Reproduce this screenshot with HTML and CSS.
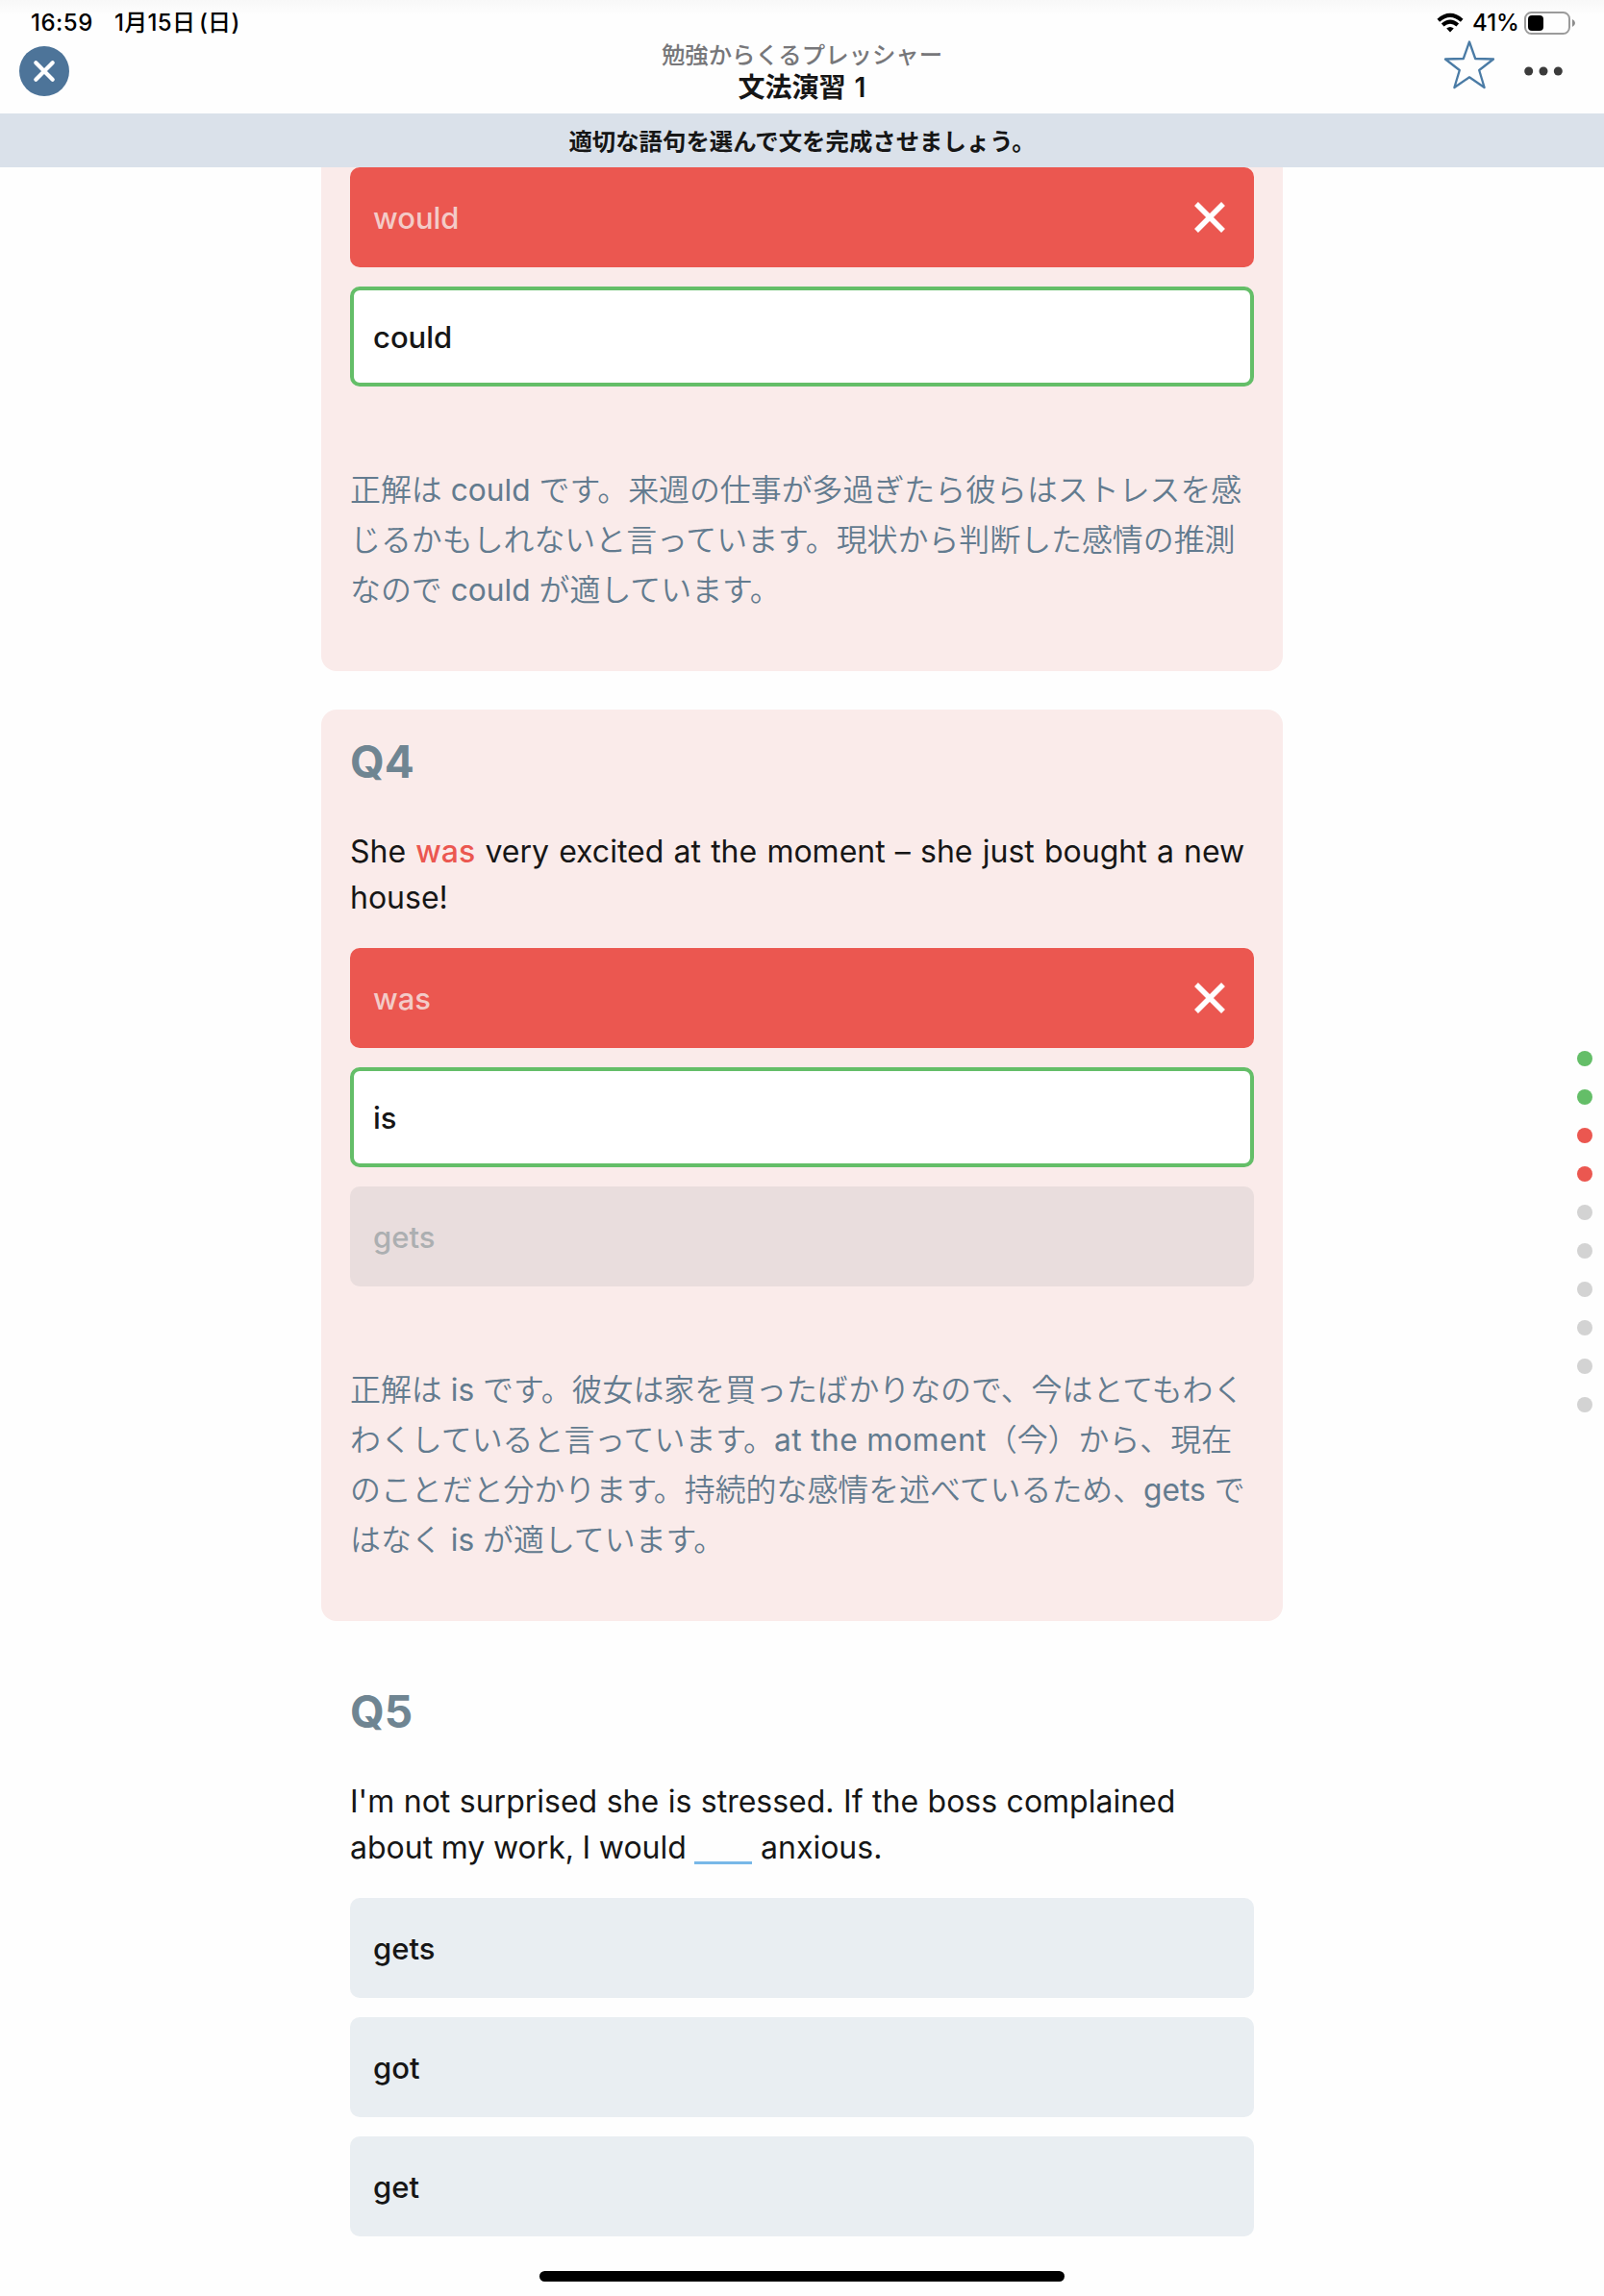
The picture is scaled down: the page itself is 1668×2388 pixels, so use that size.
FILE: index.html
```html
<!DOCTYPE html>
<html lang="ja">
<head>
<meta charset="utf-8">
<title>文法演習 1</title>
<link rel="stylesheet" href="styles.css">
</head>
<body>
<header class="top">
  <div class="status-left"><span class="clock">16:59</span><span class="date">1月15日 (日)</span></div>
  <div class="status-right">
    <svg class="wifi" width="28" height="22" viewBox="0 0 28 22" fill="none" stroke="#000" stroke-width="4"><path d="M1.8 8.2Q14 -2.5 26.2 8.2"/><path d="M6.2 13Q14 6.2 21.8 13"/><path d="M10.2 16.6Q14 13.6 17.8 16.6L14 20.6Z" fill="#000" stroke="none"/></svg>
    <span class="percent">41%</span>
    <svg class="battery" width="54" height="24" viewBox="0 0 54 24"><rect x="1" y="1" width="46" height="22" rx="6.5" fill="none" stroke="#9b9b9b" stroke-width="2"/><rect x="4" y="4" width="16" height="16" rx="4" fill="#000"/><path d="M50 8Q53 9.500 53 12T50 16Z" fill="#8c8c8c"/></svg>
  </div>
  <button class="close" aria-label="close"><svg width="52" height="52" viewBox="0 0 52 52"><path d="M17.300 17.300L34.700 34.700M34.700 17.300L17.300 34.700" stroke="#fff" stroke-width="4.200" stroke-linecap="round"/></svg></button>
  <div class="titles"><p class="subtitle">勉強からくるプレッシャー</p><h1>文法演習 1</h1></div>
  <div class="actions">
    <svg width="54" height="52" viewBox="0 0 54 52"><path d="M27 1.500L33.200 19L52 19.500L37.200 31L42.600 49L27 38.300L11.400 49L16.800 31L2 19.500L20.800 19Z" fill="none" stroke="#4a7ba5" stroke-width="2.300" stroke-linejoin="round"/></svg>
    <svg class="more" width="40" height="10" viewBox="0 0 40 10" fill="#3b3b3b"><circle cx="4.700" cy="5" r="4.500"/><circle cx="20" cy="5" r="4.500"/><circle cx="35.300" cy="5" r="4.500"/></svg>
  </div>
</header>
<p class="banner">適切な語句を選んで文を完成させましょう。</p>
<main class="quiz">
  <section class="card wrong first">
    <ul class="options">
      <li class="opt bad"><span>would</span><svg width="34" height="34" viewBox="0 0 34 34"><path d="M3 3L31 31M31 3L3 31" stroke="#fff" stroke-width="5.500"/></svg></li>
      <li class="opt good"><span>could</span></li>
    </ul>
    <p class="note"><span class="line">正解は <b>could</b> です。来週の仕事が多過ぎたら彼らはストレスを感</span><span class="line">じるかもしれないと言っています。現状から判断した感情の推測</span><span class="line">なので <b>could</b> が適しています。</span></p>
  </section>
  <section class="card wrong">
    <h2>Q4</h2>
    <p class="question"><span class="line loose">She <em>was</em> very excited at the moment – she just bought a new</span><span class="line">house!</span></p>
    <ul class="options">
      <li class="opt bad"><span>was</span><svg width="34" height="34" viewBox="0 0 34 34"><path d="M3 3L31 31M31 3L3 31" stroke="#fff" stroke-width="5.500"/></svg></li>
      <li class="opt good"><span>is</span></li>
      <li class="opt off"><span>gets</span></li>
    </ul>
    <p class="note"><span class="line">正解は <b>is</b> です。彼女は家を買ったばかりなので、今はとてもわく</span><span class="line">わくしていると言っています。<b class="phrase">at the moment</b>（今）から、現在</span><span class="line">のことだと分かります。持続的な感情を述べているため、<b>gets</b> で</span><span class="line">はなく <b>is</b> が適しています。</span></p>
  </section>
  <section class="card">
    <h2>Q5</h2>
    <p class="question"><span class="line semi">I'm not surprised she is stressed. If the boss complained</span><span class="line tight">about my work, I would <span class="blank"></span> anxious.</span></p>
    <ul class="options">
      <li class="opt"><span>gets</span></li>
      <li class="opt"><span>got</span></li>
      <li class="opt"><span>get</span></li>
    </ul>
  </section>
</main>
<nav class="progress"><i class="ok"></i><i class="ok"></i><i class="ng"></i><i class="ng"></i><i></i><i></i><i></i><i></i><i></i><i></i></nav>
<div class="home"></div>
</body>
</html>
```
FILE: styles.css
```css
* { box-sizing: border-box; margin: 0; padding: 0; }
body {
  width: 1668px; height: 2388px; overflow: hidden; position: relative;
  background: #fefefe; color: #161616;
  font-family: Inter, "Noto Sans CJK JP", sans-serif;
}
.top {
  height: 118px; display: grid; grid-template-columns: 400px 1fr 400px;
  grid-template-rows: 42px 76px;
  background: linear-gradient(#f8f8f8, #fefefe 16px);
}
.status-left { grid-area: 1 / 1; display: flex; gap: 22px; padding: 9px 0 0 32px; font-size: 24px; line-height: 30px; font-weight: 500; color: #000; white-space: nowrap; }
.clock { width: 65px; letter-spacing: .5px; }
.date { letter-spacing: .3px; word-spacing: -3px; }
.status-right { grid-area: 1 / 3; display: flex; justify-content: flex-end; align-items: flex-start; padding: 12px 29px 0 0; }
.wifi { margin: 1px 9px 0 0; }
.percent { width: 54px; font-size: 24px; line-height: 24px; font-weight: 500; color: #000; white-space: nowrap; }
.close { grid-area: 2 / 1; width: 52px; height: 52px; margin: 6px 0 0 20px; border: 0; border-radius: 50%; background: #4d7499; }
.close svg { display: block; }
.titles { grid-area: 1 / 2 / 3; text-align: center; padding-top: 40px; white-space: nowrap; }
.subtitle { font-size: 24.400px; line-height: 34px; font-weight: 500; color: #77777a; }
h1 { font-size: 28px; line-height: 34px; font-weight: 600; word-spacing: 2px; }
.actions { grid-area: 2 / 3; display: flex; justify-content: flex-end; align-items: flex-start; gap: 30px; padding-right: 43px; }
.more { margin-top: 27px; }
.banner { height: 56px; background: #dae1ea; text-align: center; font-size: 24.400px; line-height: 56px; padding-top: 1px; font-weight: 600; }
.quiz { width: 1000px; margin: 0 auto; display: flex; flex-direction: column; gap: 40px; }
.card { padding: 30px 30px 59px; border-radius: 16px; }
.wrong { background: #faebea; }
.first { padding-top: 0; border-radius: 0 0 16px 16px; }
h2 { font-size: 46px; line-height: 48px; font-weight: 700; color: #6f8592; }
.question { margin: 46px 0 28px; font-size: 32px; line-height: 48px; }
.line { display: block; white-space: nowrap; }
.loose { word-spacing: 1.200px; }
.semi { word-spacing: .5px; }
.tight { word-spacing: -.4px; }
.question em { font-style: normal; font-weight: 500; color: #eb5750; }
.blank { display: inline-block; width: 60px; height: 3px; background: #78b8e8; vertical-align: -6px; }
.options { list-style: none; display: flex; flex-direction: column; gap: 20px; }
.opt { height: 104px; border-radius: 10px; background: #e9eef2; display: flex; align-items: center; justify-content: space-between; padding: 0 29px 0 24px; font-size: 31px; font-weight: 500; }
.bad { background: #eb5750; color: #f3cbc8; }
.good { background: #fff; border: 4px solid #64be68; padding-left: 20px; }
.off { background: #e9dddd; color: #acafb1; }
.note { margin: 82px 0 -1px; font-size: 31.920px; line-height: 52px; font-weight: 350; color: #637b8f; }
.note b { font-weight: 400; font-size: 31.700px; }
.note .phrase { letter-spacing: .4px; }
.progress { position: absolute; right: 12px; top: 1093px; display: flex; flex-direction: column; gap: 24px; }
.progress i { width: 16px; height: 16px; border-radius: 50%; background: #d3d3d3; }
.progress .ok { background: #64be68; }
.progress .ng { background: #eb5750; }
.home { position: absolute; left: 561px; top: 2362px; width: 546px; height: 11px; border-radius: 6px; background: #000; }
```
